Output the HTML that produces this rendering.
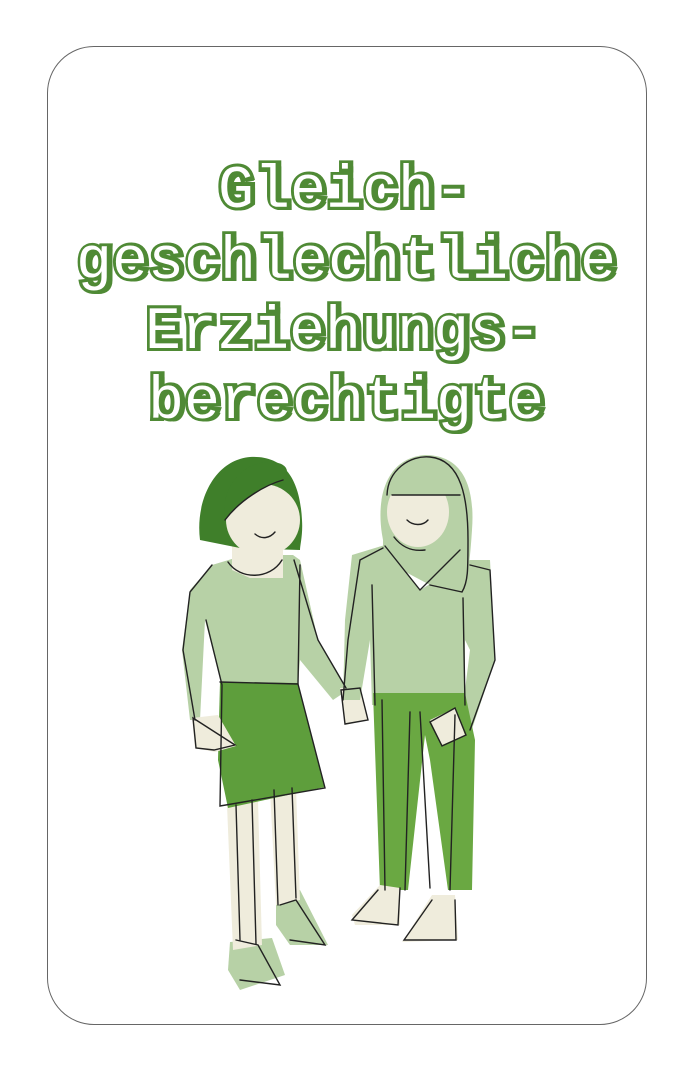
<!DOCTYPE html>
<html><head><meta charset="utf-8"><style>
html,body{margin:0;padding:0;background:#fff;}
body{width:696px;height:1074px;position:relative;overflow:hidden;}
.card{position:absolute;left:47px;top:46px;width:600px;height:979px;border:1.3px solid #666;border-radius:47px;box-sizing:border-box;}
.t{position:absolute;left:0;width:696px;text-align:center;font-family:"Liberation Mono",monospace;font-weight:bold;font-size:60px;line-height:60px;color:#4f8a35;-webkit-text-stroke:6px #4f8a35;text-shadow:3px 3px 0 #4f8a35;letter-spacing:0;}
.w{position:absolute;left:0;width:696px;text-align:center;font-family:"Liberation Mono",monospace;font-weight:normal;font-size:60px;line-height:60px;color:#fff;letter-spacing:0;}
</style></head><body>
<div class="card"></div>
<div class="t" style="top:162px;left:-3px">Gleich-</div>
<div class="t" style="top:233px;left:-1px">geschlechtliche</div>
<div class="t" style="top:303px;left:-4px">Erziehungs-</div>
<div class="t" style="top:373px;left:-1px">berechtigte</div>
<div class="w" style="top:162px;left:-4px">Gleich-</div>
<div class="w" style="top:233px;left:-2px">geschlechtliche</div>
<div class="w" style="top:303px;left:-5px">Erziehungs-</div>
<div class="w" style="top:373px;left:-2px">berechtigte</div>
<svg width="696" height="1074" style="position:absolute;left:0;top:0" viewBox="0 0 696 1074">
<g stroke="none">
<polygon fill="#b7d1a6" points="230,942 272,938 285,975 240,990 228,970"/>
<polygon fill="#b7d1a6" points="276,895 300,890 328,945 290,945 276,925"/>
<polygon fill="#efecdc" points="227,805 258,800 262,945 233,950"/>
<polygon fill="#efecdc" points="270,790 296,788 300,900 276,905"/>
<polygon fill="#b7d1a6" points="212,565 245,555 293,555 300,560 318,640 348,690 333,700 300,660 298,685 222,685 205,620 200,720 190,720 182,650 190,590"/>
<polygon fill="#5e9e3c" points="220,682 298,683 325,787 228,808 218,760"/>
<polygon fill="#efecdc" points="192,718 218,715 236,746 215,752 195,748"/>
<polygon fill="#efecdc" points="340,688 360,687 368,720 345,725"/>
<polygon fill="#efecdc" points="232,545 283,545 283,578 250,578 232,570"/>
<path fill="#3f7f2a" d="M200,540 C195,500 215,460 250,457 C285,455 300,480 302,520 C303,535 300,545 300,550 L240,548 Z"/>
<ellipse fill="#efecdc" cx="263" cy="520" rx="37" ry="36"/>
<path fill="#3f7f2a" d="M225,520 C220,490 240,462 270,462 C285,462 292,470 283,480 C265,485 240,500 225,520Z"/>
<path fill="#b7d1a6" d="M383,540 C375,500 385,458 425,455 C465,455 475,490 472,530 C470,560 468,580 462,590 L430,585 L383,560 Z"/>
<polygon fill="#b7d1a6" points="352,555 385,545 420,590 445,575 470,560 490,560 495,660 470,735 455,735 465,690 470,650 465,640 465,705 372,705 370,640 360,700 343,700 345,620"/>
<ellipse fill="#efecdc" cx="418" cy="512" rx="31" ry="35"/>
<path fill="#b7d1a6" d="M387,495 C390,470 410,460 430,462 C455,462 462,480 462,495 Z"/>
<polygon fill="#6aa842" points="373,693 465,693 475,740 472,890 448,890 430,760 425,735 408,890 380,890"/>
<polygon fill="#efecdc" points="380,885 400,888 400,925 355,925 352,915"/>
<polygon fill="#efecdc" points="432,895 455,895 458,940 402,942 410,930"/>
<polygon fill="#efecdc" points="430,720 455,708 465,735 442,745"/>
</g>
<g fill="none" stroke="#222" stroke-width="1.4" stroke-linecap="round">
<path d="M225,520 C240,500 265,485 283,480"/>
<path d="M255,534 C262,540 270,538 275,532"/>
<path d="M228,562 C240,580 270,580 282,560"/>
<path d="M212,565 L190,592 L183,650 L195,720"/>
<path d="M206,620 L222,685 L220,806 L325,788 L298,684 L300,565"/>
<path d="M220,682 L298,684"/>
<path d="M294,560 L318,640 L346,688"/>
<path d="M193,718 L235,745 L214,750 L196,748 Z"/>
<path d="M341,690 L360,688 L368,720 L345,724 Z"/>
<path d="M236,805 L240,940 M252,800 L256,944"/>
<path d="M274,790 L278,905 M292,788 L296,898"/>
<path d="M236,940 L258,945 L280,985 L240,980"/>
<path d="M280,905 L296,900 L325,945 L290,940"/>
<path d="M387,495 C388,470 410,455 430,457 C462,460 468,500 468,540 C468,570 468,582 462,592 L430,585"/>
<path d="M392,495 L460,495"/>
<path d="M407,520 C413,526 423,526 428,520"/>
<path d="M394,537 C400,545 410,552 425,550"/>
<path d="M385,546 L420,590 L460,550"/>
<path d="M383,548 L360,560 L348,640 L343,700"/>
<path d="M372,585 L375,705 M463,598 L465,705"/>
<path d="M470,565 L490,570 L495,660 L470,730"/>
<path d="M382,700 L385,890 M410,712 L405,890 M420,712 L430,888 M455,715 L450,890"/>
<path d="M378,890 L352,920 L398,925 L400,888"/>
<path d="M432,900 L404,940 L456,940 L455,900"/>
<path d="M430,722 L455,708 L466,735 L442,746 Z"/>
</g>
</svg>
</body></html>
